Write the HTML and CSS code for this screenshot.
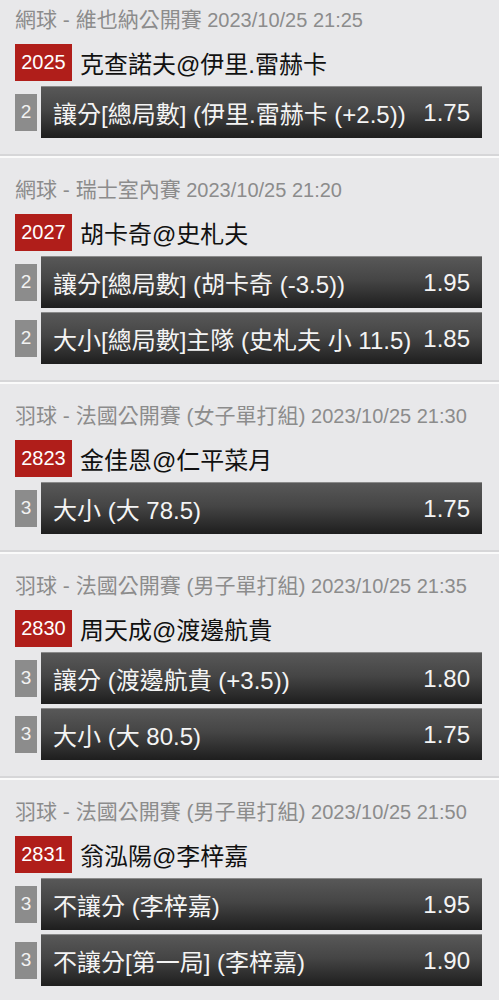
FILE: index.html
```html
<!DOCTYPE html>
<html>
<head>
    <meta charset="utf-8">
    <title>Match List</title>
    <link rel="stylesheet" href="styles.css">
</head>
<body>
    <div class="match-list">

        <!-- 網球 -->
        <div class="match">
            <div class="match-head"><span class="league">網球 - 維也納公開賽</span> <span class="kickoff">2023/10/25 21:25</span></div>
            <div class="match-title">
                <span class="match-code">2025</span>
                <span class="match-teams">克查諾夫@伊里.雷赫卡</span>
            </div>
            <div class="bet">
                <span class="bet-num">2</span>
                <div class="bet-btn">
                    <span class="bet-name">讓分[總局數] (伊里.雷赫卡 (+2.5))</span>
                    <span class="bet-odds">1.75</span>
                </div>
            </div>
        </div>

        <div class="match">
            <div class="match-head"><span class="league">網球 - 瑞士室內賽</span> <span class="kickoff">2023/10/25 21:20</span></div>
            <div class="match-title">
                <span class="match-code">2027</span>
                <span class="match-teams">胡卡奇@史札夫</span>
            </div>
            <div class="bet">
                <span class="bet-num">2</span>
                <div class="bet-btn">
                    <span class="bet-name">讓分[總局數] (胡卡奇 (-3.5))</span>
                    <span class="bet-odds">1.95</span>
                </div>
            </div>
            <div class="bet">
                <span class="bet-num">2</span>
                <div class="bet-btn">
                    <span class="bet-name">大小[總局數]主隊 (史札夫 小 11.5)</span>
                    <span class="bet-odds">1.85</span>
                </div>
            </div>
        </div>

        <!-- 羽球 -->
        <div class="match">
            <div class="match-head"><span class="league">羽球 - 法國公開賽 (女子單打組)</span> <span class="kickoff">2023/10/25 21:30</span></div>
            <div class="match-title">
                <span class="match-code">2823</span>
                <span class="match-teams">金佳恩@仁平菜月</span>
            </div>
            <div class="bet">
                <span class="bet-num">3</span>
                <div class="bet-btn">
                    <span class="bet-name">大小 (大 78.5)</span>
                    <span class="bet-odds">1.75</span>
                </div>
            </div>
        </div>

        <div class="match">
            <div class="match-head"><span class="league">羽球 - 法國公開賽 (男子單打組)</span> <span class="kickoff">2023/10/25 21:35</span></div>
            <div class="match-title">
                <span class="match-code">2830</span>
                <span class="match-teams">周天成@渡邊航貴</span>
            </div>
            <div class="bet">
                <span class="bet-num">3</span>
                <div class="bet-btn">
                    <span class="bet-name">讓分 (渡邊航貴 (+3.5))</span>
                    <span class="bet-odds">1.80</span>
                </div>
            </div>
            <div class="bet">
                <span class="bet-num">3</span>
                <div class="bet-btn">
                    <span class="bet-name">大小 (大 80.5)</span>
                    <span class="bet-odds">1.75</span>
                </div>
            </div>
        </div>

        <div class="match">
            <div class="match-head"><span class="league">羽球 - 法國公開賽 (男子單打組)</span> <span class="kickoff">2023/10/25 21:50</span></div>
            <div class="match-title">
                <span class="match-code">2831</span>
                <span class="match-teams">翁泓陽@李梓嘉</span>
            </div>
            <div class="bet">
                <span class="bet-num">3</span>
                <div class="bet-btn">
                    <span class="bet-name">不讓分 (李梓嘉)</span>
                    <span class="bet-odds">1.95</span>
                </div>
            </div>
            <div class="bet">
                <span class="bet-num">3</span>
                <div class="bet-btn">
                    <span class="bet-name">不讓分[第一局] (李梓嘉)</span>
                    <span class="bet-odds">1.90</span>
                </div>
            </div>
        </div>

    </div>
</body>
</html>
```

FILE: styles.css
```css
body {
    font-family: "Liberation Sans", "Noto Sans CJK TC", sans-serif;
    background-color: #e8e8ea;
    margin: 0;
    overflow: hidden;
}

.match-list {
    margin-top: -12px;
}

.match {
    padding: 20px 17px 16px 15px;
    border-bottom: 2px solid #d6d6d8;
    box-shadow: 0 2px 0 #fafafa;
    margin-bottom: 2px;
}

.match-head {
    height: 24px;
    line-height: 24px;
    font-size: 20px;
    color: #8c8c8c;
    white-space: nowrap;
}

.match-head .league {
    font-size: 21px;
}

.match-title {
    display: flex;
    align-items: center;
    gap: 8px;
    margin-top: 12px;
    height: 37px;
}

.match-code {
    display: flex;
    align-items: center;
    justify-content: center;
    width: 57px;
    height: 37px;
    background-color: #b01e1a;
    color: #fff;
    font-size: 20px;
}

.match-teams {
    font-size: 24px;
    color: #111;
}

.bet {
    display: flex;
    align-items: center;
    gap: 4px;
    margin-top: 5px;
}

.bet + .bet {
    margin-top: 4px;
}

.bet-num {
    display: flex;
    align-items: center;
    justify-content: center;
    flex: 0 0 22px;
    height: 37px;
    background-color: #8c8c8c;
    color: #f2f2f2;
    font-size: 19px;
}

.bet-btn {
    flex: 1;
    display: flex;
    align-items: center;
    justify-content: space-between;
    min-width: 0;
    height: 52px;
    padding: 0 12px;
    box-sizing: border-box;
    background: linear-gradient(#585858, #454545 45%, #1e1e1e);
    border-top: 1px solid #8a8a8a;
    color: #f4f4f4;
    font-size: 24px;
}

.bet-name {
    white-space: nowrap;
    overflow: hidden;
}

.bet-odds {
    flex: none;
}
```
